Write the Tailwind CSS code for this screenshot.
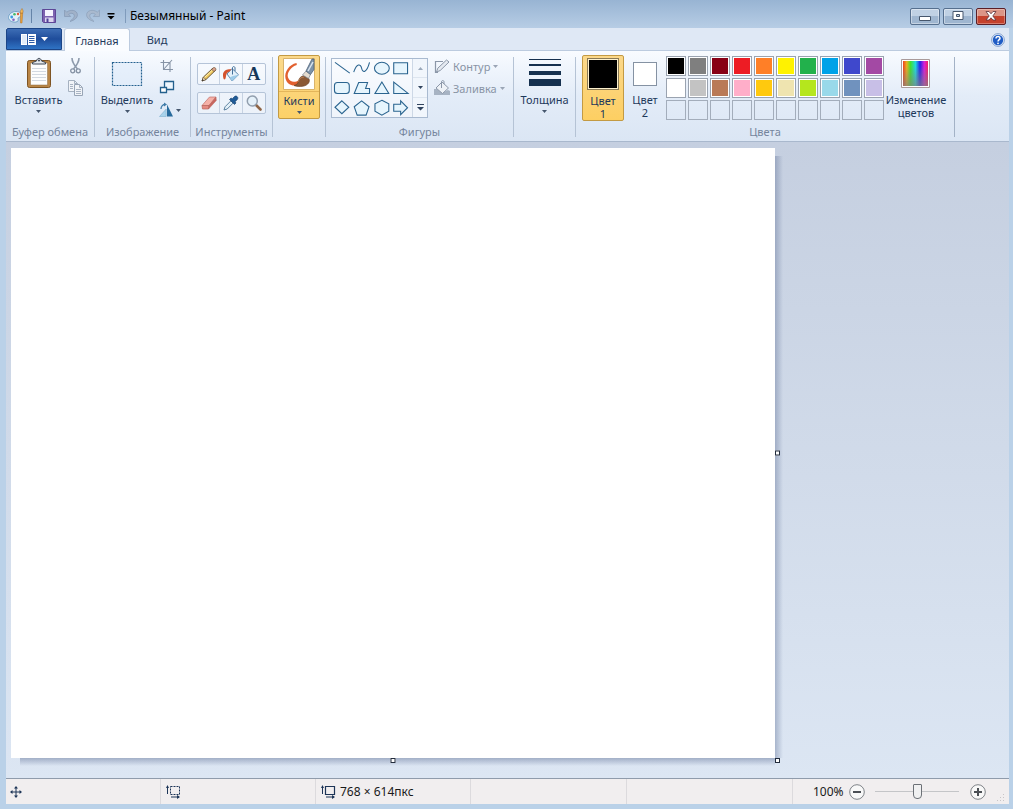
<!DOCTYPE html>
<html lang="ru">
<head>
<meta charset="utf-8">
<meta name="viewport" content="width=device-width, initial-scale=1">
<title>Безымянный - Paint</title>
<script src="https://cdn.jsdelivr.net/npm/@tailwindcss/browser@4"></script>
</head>
<body class="flex min-h-screen flex-col bg-[#bad1e8] font-['Noto_Sans','Open_Sans',sans-serif] text-[11px] leading-[13px] text-[#1e395b]">

<!-- Title bar -->
<header class="flex h-7 items-center bg-linear-to-b from-[#98b4d3] to-[#b7cde5] pr-[7px] pl-2 pt-1">
  <svg class="size-4" viewBox="0 0 16 16"><path d="M.500 9.500C.500 6 4 3.500 8 3.500s5.500 2 5 4-3 1.500-3 3 1 2-1 3.200C5.500 15 .500 13 .500 9.500z" fill="#e3f0f8" stroke="#6a9cc4" stroke-width=".9"/><circle cx="3.700" cy="9" r="1.400" fill="#3b9be0"/><circle cx="6.500" cy="6.300" r="1.300" fill="#46b86a"/><circle cx="5.500" cy="11.700" r="1.300" fill="#8264c0"/><circle cx="10" cy="6" r="1.200" fill="#e05a3b"/><path d="M12.500 5h2.200l-.7 10h-1.500z" fill="#e8a23a" stroke="#b87324" stroke-width=".5"/><path d="M12.500 5c-.7-2 .8-3 1.500-4.500 1 1.500 1.500 3 .7 4.500z" fill="#f0b95a" stroke="#a86a28" stroke-width=".5"/></svg>
  <span class="ml-[7px] h-3.5 w-px bg-[#6584a8]"></span>
  <button class="ml-[9px]" aria-label="Сохранить"><svg class="size-4" viewBox="0 0 16 16"><path d="M1.500 1.500h13v13h-12l-1-1z" fill="#7d62b0" stroke="#5d4696"/><path d="M4 2h8v6H4z" fill="#f6f4ff"/><path d="M4 9.500h8.500V14H4z" fill="#dcd6ee"/><path d="M5.500 10.500h2V14h-2z" fill="#51429a"/></svg></button>
  <button class="ml-1.5" aria-label="Отменить"><svg class="size-4" viewBox="0 0 16 16"><path d="M1.500 2v6.500h6.200L5.600 6.300c2-1.600 5-1.300 5.600.7.600 2.300-1.700 4-4.200 6.500 4.300-1.300 7.500-3.500 7.400-6.800C14.200 2.300 8 .800 3.700 4.200z" fill="#a0b1c8" stroke="#889cb7" stroke-width=".8"/></svg></button>
  <button class="ml-1.5" aria-label="Вернуть"><svg class="size-4" viewBox="0 0 16 16"><path d="M14.500 2v6.500H8.300l2.100-2.200c-2-1.600-5-1.300-5.600.7-.6 2.300 1.700 4 4.200 6.500-4.300-1.300-7.500-3.500-7.400-6.800C1.800 2.300 8 .800 12.300 4.200z" fill="#a9b9ce" stroke="#8fa3bd" stroke-width=".8"/></svg></button>
  <button class="ml-1.5" aria-label="Настройка панели"><svg class="h-4 w-2" viewBox="0 0 8 16"><path d="M.500 5h7v1.500h-7z" fill="#000"/><path d="M.500 8h7L4 11.500z" fill="#000"/></svg></button>
  <span class="ml-2.5 h-3.5 w-px bg-[#7f9bbb]"></span>
  <h1 class="ml-1 text-xs text-black">Безымянный - Paint</h1>
  <div class="ml-auto flex gap-[3px]">
    <button aria-label="Свернуть" class="grid h-[17px] w-[30px] place-items-center rounded-[2px] border border-[#566f8e] bg-linear-to-b from-[#c0d1e4] from-50% to-[#9fb6d0] to-50% ring-1 ring-white/40 ring-inset"><svg width="12" height="12" viewBox="0 0 12 12"><path d="M.500 6.500h11v4H.500z" fill="#fff" stroke="#46566c"/></svg></button>
    <button aria-label="Развернуть" class="grid h-[17px] w-[30px] place-items-center rounded-[2px] border border-[#566f8e] bg-linear-to-b from-[#c0d1e4] from-50% to-[#9fb6d0] to-50% ring-1 ring-white/40 ring-inset"><svg width="12" height="10" viewBox="0 0 12 10"><path d="M1 .500h10v8H1zM4.500 3.500v2h3v-2z" fill="#fff" fill-rule="evenodd" stroke="#46566c"/></svg></button>
    <button aria-label="Закрыть" class="grid h-[17px] w-[30px] place-items-center rounded-[2px] border border-[#5b1f27] bg-linear-to-b from-[#dc9586] from-50% to-[#c4412c] to-50% ring-1 ring-white/30 ring-inset"><svg width="12" height="10" viewBox="0 0 12 10"><path d="M1 .500h3l2 2.300L8 .500h3L7.800 5 11 9H8L6 6.800 4 9H1l3.200-4z" fill="#fff" stroke="#5a3038" stroke-width=".8"/></svg></button>
  </div>
</header>

<div class="mr-1 ml-1.5 flex flex-1 flex-col">
  <!-- Tabs -->
  <nav class="flex h-[23px] bg-[#dfe8f5] shadow-[inset_0_-1px_0_#bccbdf]">
    <button aria-label="Меню Paint" class="flex h-[22px] w-14 items-center justify-center gap-[5px] rounded-t-[2px] border border-[#1c4587] bg-linear-to-b from-[#3d6db5] via-[#1f4d9b] to-[#2f73c4]">
      <svg width="15" height="11" viewBox="0 0 15 11"><path d="M0 0h15v11H0z" fill="#fff"/><path d="M6.500 0v11" stroke="#2d5ba6"/><path d="M8 2.500h5.500M8 4.500h5.500M8 6.500h5.500M8 8.500h5.500" stroke="#2d5ba6"/><path d="M1 1h4.500v9H1z" fill="#e3edf9"/></svg>
      <svg width="7" height="4" viewBox="0 0 7 4"><path d="M0 0h7L3.500 4z" fill="#fff"/></svg>
    </button>
    <button class="ml-0.5 w-[66px] rounded-t-[3px] border border-b-0 border-[#bccbdf] bg-[#fafcff]">Главная</button>
    <button class="w-[54px]">Вид</button>
    <button class="mr-1 ml-auto" aria-label="Справка"><svg class="size-3.5" viewBox="0 0 14 14"><circle cx="7" cy="7" r="6.400" fill="#e6effa" stroke="#6f8fc4" stroke-width=".8"/><circle cx="7" cy="7" r="5.200" fill="#1f5cc5"/><path d="M5 5.400c0-2.600 4.200-2.500 4 0C8.900 6.700 7.100 6.700 7 8.500" fill="none" stroke="#fff" stroke-width="1.500"/><circle cx="7" cy="10.300" r=".9" fill="#fff"/></svg></button>
  </nav>

  <!-- Ribbon -->
  <div class="flex h-[91px] border-b border-[#a9b8cd] bg-linear-to-b from-[#f8fbff] via-[#e3ecf8] to-[#dbe6f4] pt-1 pb-0.5">
    <section class="flex w-[88px] flex-col" aria-label="Буфер обмена">
      <div class="flex h-[70px] gap-1 pl-[7px]">
        <button class="flex w-[51px] flex-col items-center pt-0.5">
          <svg width="26" height="32" viewBox="0 0 26 32"><rect x="1.500" y="3.500" width="23" height="27" rx="2" fill="#b98546" stroke="#7e5423"/><path d="M4.500 6h17v22h-17z" fill="#fdfdfd" stroke="#8b6a42" stroke-width=".5"/><path d="M6 11.500h14M6 14.500h14M6 17.500h14M6 20.500h14M6 23.500h14" stroke="#d3d9e1"/><path d="M6.500 7V5.500L10.500 4c.5-3.500 4.500-3.500 5 0l4 1.500V7z" fill="#e5e9ee" stroke="#3c4654"/><circle cx="13" cy="3.500" r="1" fill="#3c4654"/></svg>
          <span class="mt-1 whitespace-nowrap">Вставить</span>
          <svg class="mt-1" width="5" height="3" viewBox="0 0 5 3"><path d="M0 0h5L2.500 3z" fill="#45566d"/></svg>
        </button>
        <div class="flex flex-col gap-1.5 pt-[3px]">
          <button aria-label="Вырезать"><svg class="size-4" viewBox="0 0 16 16"><path d="M4 0c0 4 1.500 6.500 5.500 11M11 0c0 4-1.500 6.500-5.500 11" fill="none" stroke="#8e9bac" stroke-width="1.600"/><circle cx="4.700" cy="12.800" r="2" fill="none" stroke="#8592a4" stroke-width="1.300"/><circle cx="10.300" cy="12.800" r="2" fill="none" stroke="#8592a4" stroke-width="1.300"/></svg></button>
          <button aria-label="Копировать"><svg class="size-4" viewBox="0 0 16 16"><path d="M.500.500h6l3 3v8h-9zM6.500.500v3h3" fill="#f1f4f8" stroke="#a5b1c0"/><path d="M6.500 4.500h5l3 3v8h-8z" fill="#f1f4f8" stroke="#98a5b6"/><path d="M11.500 4.500v3h3M8 9.500h5M8 11.500h5M8 13.500h5M2 4.500h3M2 6.500h3M2 8.500h3" fill="none" stroke="#a9b4c3"/></svg></button>
        </div>
      </div>
      <h2 class="text-center whitespace-nowrap text-[#75859d]">Буфер обмена</h2>
    </section>
    <span class="my-0.5 w-px bg-[#b5c3d5]"></span>

    <section class="flex w-[95px] flex-col" aria-label="Изображение">
      <div class="flex h-[70px] gap-1.5 pl-1.5">
        <button class="flex w-[52px] flex-col items-center pt-0.5">
          <svg width="32" height="32" viewBox="0 0 32 32"><rect x="1.500" y="5.500" width="29" height="23" fill="#dceafa" fill-opacity=".5" stroke="#24618f" stroke-width="1.200" stroke-dasharray="2 1"/></svg>
          <span class="mt-1 whitespace-nowrap">Выделить</span>
          <svg class="mt-1" width="5" height="3" viewBox="0 0 5 3"><path d="M0 0h5L2.500 3z" fill="#45566d"/></svg>
        </button>
        <div class="flex flex-col items-start gap-1.5 pt-[3px]">
          <button aria-label="Обрезать"><svg class="size-4" viewBox="0 0 16 16"><path d="M4.500 2v9.500H14M1.500 4.500h9.500V14M4.500 11.500l8.500-9.500" fill="none" stroke="#8794a6" stroke-width="1.100"/></svg></button>
          <button aria-label="Изменить размер"><svg class="size-4" viewBox="0 0 16 16"><path d="M5.500 1.500h9v8h-9z" fill="#eef6fd" stroke="#23608d" stroke-width="1.300"/><path d="M1.500 7.500h6v5h-6z" fill="#fff" stroke="#23608d" stroke-width="1.300"/></svg></button>
          <button aria-label="Повернуть" class="flex items-center gap-px"><svg class="size-4" viewBox="0 0 16 16"><path d="M8 2.500L14 14.500H8z" fill="#276a9c"/><path d="M7.200 7v7.500H.500z" fill="#a8d3ec" stroke="#7fb0cf" stroke-width=".6"/><path d="M2 7c0-3 2-4.500 4-4.500" fill="none" stroke="#3f7ba7" stroke-width="1.300"/><path d="M5 .500l3 2-3 2z" fill="#3f7ba7"/></svg><svg width="5" height="3" viewBox="0 0 5 3"><path d="M0 0h5L2.500 3z" fill="#45566d"/></svg></button>
        </div>
      </div>
      <h2 class="text-center whitespace-nowrap text-[#75859d]">Изображение</h2>
    </section>
    <span class="my-0.5 w-px bg-[#b5c3d5]"></span>

    <section class="flex w-[81px] flex-col" aria-label="Инструменты">
      <div class="flex h-[70px] flex-col items-center gap-[7px] pt-2">
        <div class="grid h-[22px] w-[69px] grid-cols-3 divide-x divide-[#c6d2e2] rounded-[2px] border border-[#b5c4d8] bg-white/40">
          <button aria-label="Карандаш" class="grid place-items-center"><svg class="size-4" viewBox="0 0 16 16"><path d="M1 15l1.300-3.800L12 2l2.500 2.300L5 13.500z" fill="#f0c95e" stroke="#5e4a2a" stroke-width=".9"/><path d="M3.500 11.500l8.500-8" stroke="#fff1b4"/><path d="M1 15l1.300-3.800L5 13.500z" fill="#f4e3c4" stroke="#5c4a33" stroke-width=".6"/><path d="M1 15l.6-1.800 1.300 1.100z" fill="#222"/><path d="M12 2c1.500-1.500 4 .8 2.500 2.300L13 5.600 10.600 3.300z" fill="#d9a08c" stroke="#5e4a2a" stroke-width=".6"/></svg></button>
          <button aria-label="Заливка цветом" class="grid place-items-center"><svg class="size-4" viewBox="0 0 16 16"><path d="M9 2.500l6.500 6.200-6.300 6.300L4 8z" fill="#e2f0fa" stroke="#4c7ba5" stroke-width=".9"/><path d="M10 10l5.500-1.300L9.200 15 6.500 11.400z" fill="#9dcbe8"/><path d="M9.500 8.500V2c0-2 2.500-1.800 2.500 0v3" fill="none" stroke="#44709a"/><path d="M8.500 3.200C5 2.800.500 4 0 8c-.2 2 .3 5.500 1.500 5.500S3 10.500 3.200 9C3.500 7.200 5 5.800 6.300 5.800z" fill="#d4532e"/></svg></button>
          <button aria-label="Текст" class="grid place-items-center font-['Liberation_Serif',serif] text-lg leading-4 font-bold text-[#173759]">A</button>
        </div>
        <div class="grid h-[22px] w-[69px] grid-cols-3 divide-x divide-[#c6d2e2] rounded-[2px] border border-[#b5c4d8] bg-white/40">
          <button aria-label="Ластик" class="grid place-items-center"><svg class="size-4" viewBox="0 0 16 16"><path d="M8.500 2h6.500L8 10.500H1z" fill="#f5b1a8" stroke="#c0706a" stroke-width=".7"/><path d="M1 10.500h7l-.5 3.500H1.500z" fill="#e58a82" stroke="#b9655d" stroke-width=".7"/><path d="M8 10.500L15 2l.3 3.500L7.500 14z" fill="#c8665f" stroke="#b9655d" stroke-width=".5"/></svg></button>
          <button aria-label="Палитра" class="grid place-items-center"><svg class="size-4" viewBox="0 0 16 16"><path d="M1 15l1-3.200 6-6 2.200 2.200-6 6z" fill="#e3f0f8" stroke="#4f7797" stroke-width=".9"/><path d="M6.500 4.500L8 3l1.300.7L11.500 1.500c1.800-1.500 4.300.8 3 2.800L12.200 6.700 13 8l-1.500 1.500z" fill="#205b97" stroke="#153f6c" stroke-width=".6"/></svg></button>
          <button aria-label="Масштаб" class="grid place-items-center"><svg class="size-4" viewBox="0 0 16 16"><path d="M10 10l4.500 4.500" stroke="#8f6546" stroke-width="2.600" stroke-linecap="round"/><circle cx="6.300" cy="6" r="5" fill="#e5f1fa" stroke="#929fae" stroke-width="1.500"/></svg></button>
        </div>
      </div>
      <h2 class="text-center whitespace-nowrap text-[#75859d]">Инструменты</h2>
    </section>
    <span class="my-0.5 w-px bg-[#b5c3d5]"></span>

    <section class="flex w-[52px] flex-col items-center">
      <button class="flex h-16 w-[42px] flex-col items-center rounded-[2px] border border-[#c39a43] bg-linear-to-b from-[#fbd98c] to-[#fcd168] pt-0.5">
        <svg width="32" height="32" viewBox="0 0 32 32"><path d="M.500.500h31v31H.500z" fill="#fff" stroke="#d9b36b"/><path d="M13.500 5C6 6.500 1 14 2.500 20.500 4 27 11 29.500 17 26l-1-4c-4 3-9 2.500-11-2.500C3.500 15 8 8.500 13.800 7z" fill="#e2602f"/><path d="M11 27.500c4-1 4-3 5-6s5.500-5.500 9-2 0 8-5 8.700c-3 .5-7 .3-9-.7z" fill="#8b5935" stroke="#643d22" stroke-width=".6"/><path d="M15 24c1-3 3-5 6-5" fill="none" stroke="#b98258"/><path d="M19.500 17l3.500-4 4.500 3.500-2 4z" fill="#e5dccf" stroke="#78838f" stroke-width=".7"/><path d="M23 13l6-12h2v10.500L27.500 16.500z" fill="#7d93aa" stroke="#4f6277" stroke-width=".8"/><path d="M25 13l5-9" stroke="#dbe5ef" stroke-width="1.500"/></svg>
        <span class="mt-px w-full border-t border-[#e4b65a] pt-0.5">Кисти</span>
        <svg class="mt-1" width="5" height="3" viewBox="0 0 5 3"><path d="M0 0h5L2.500 3z" fill="#45566d"/></svg>
      </button>
    </section>
    <span class="my-0.5 w-px bg-[#b5c3d5]"></span>

    <section class="flex w-[187px] flex-col" aria-label="Фигуры">
      <div class="flex h-[70px] items-start gap-1.5 pt-[3px] pl-[5px]">
        <div class="flex h-[60px] w-[97px] border border-[#a9bad0] bg-white/50">
          <svg class="flex-1" width="81" height="58" viewBox="0 0 81 58" fill="#e6f5fd" stroke="#2a648f" stroke-width="1.100" role="img" aria-label="Набор фигур">
            <path d="M3 3l15 11"/><path d="M22 13c3-9 7-9 8-4s5 5 8-6" fill="none"/><ellipse cx="50.500" cy="9" rx="7.500" ry="6"/><path d="M62.500 3.500h14v11h-14z"/>
            <rect x="2.500" y="23.500" width="15" height="11" rx="3"/><path d="M27 23.500h9l-2 6h4v5H22.500z"/><path d="M50.500 23l7 11.500h-14z"/><path d="M62.500 23v11.500H77z"/>
            <path d="M10 42l7 6.500-7 6.500-7-6.500z"/><path d="M30 42l7.500 6-3 8.500h-9l-3-8.500z"/><path d="M50.500 41.500l7 3.500v7.500l-7 4-7-4V45z"/><path d="M62.500 45.500h7V42l7 7-7 7v-3.500h-7z"/>
          </svg>
          <div class="grid w-[15px] grid-rows-3 divide-y divide-[#dde5ef] border-l border-[#cdd8e6] bg-[#f1f6fc]">
            <button aria-label="Вверх" class="grid place-items-center"><svg width="5" height="3" viewBox="0 0 5 3"><path d="M0 3h5L2.500 0z" fill="#9aa8ba"/></svg></button>
            <button aria-label="Вниз" class="grid place-items-center"><svg width="5" height="3" viewBox="0 0 5 3"><path d="M0 0h5L2.500 3z" fill="#31445e"/></svg></button>
            <button aria-label="Ещё" class="grid place-items-center"><svg width="7" height="7" viewBox="0 0 7 7"><path d="M0 0h7v1H0zM0 3h7L3.500 6.500z" fill="#31445e"/></svg></button>
          </div>
        </div>
        <div class="flex flex-col gap-1.5 text-[#8994a5]">
          <button class="flex h-4 items-center gap-[3px]" disabled><svg class="size-4" viewBox="0 0 16 16"><path d="M9 3.500H1.500v11H4" fill="none" stroke="#8b97a8" stroke-width="1.200"/><path d="M2.500 14l1.300-3.800L12.500 2 15 4 6.200 12.500z" fill="#e5eaf1" stroke="#8b97a8"/></svg>Контур<svg width="5" height="3" viewBox="0 0 5 3"><path d="M0 0h5L2.500 3z" fill="#9aa5b5"/></svg></button>
          <button class="flex h-4 items-center gap-[3px]" disabled><svg class="size-4" viewBox="0 0 16 16"><path d="M0 9h3l5 4 6-3 2 1v4H0z" fill="#a7b3c3"/><path d="M8 2l6.500 6L8.500 13.500 2 8z" fill="#eef2f7" stroke="#8b97a8"/><path d="M7.500 8V2c0-2 2.500-2 2.500 0v2" fill="none" stroke="#8b97a8"/></svg>Заливка<svg width="5" height="3" viewBox="0 0 5 3"><path d="M0 0h5L2.500 3z" fill="#9aa5b5"/></svg></button>
        </div>
      </div>
      <h2 class="text-center whitespace-nowrap text-[#75859d]">Фигуры</h2>
    </section>
    <span class="my-0.5 w-px bg-[#b5c3d5]"></span>

    <section class="flex w-[61px] flex-col items-center">
      <button class="flex flex-col items-center pt-0.5">
        <svg width="32" height="32" viewBox="0 0 32 32" fill="#16314f"><path d="M0 2h32v1H0zM0 7h32v2H0zM0 14h32v4H0zM0 22h32v7H0z"/></svg>
        <span class="mt-1 whitespace-nowrap">Толщина</span>
        <svg class="mt-1" width="5" height="3" viewBox="0 0 5 3"><path d="M0 0h5L2.500 3z" fill="#45566d"/></svg>
      </button>
    </section>
    <span class="my-0.5 w-px bg-[#b5c3d5]"></span>

    <section class="flex w-[378px] flex-col" aria-label="Цвета">
      <div class="flex h-[70px] items-start pl-[6px]">
        <button class="flex h-[66px] w-[42px] flex-col items-center rounded-[2px] border border-[#c39a43] bg-linear-to-b from-[#fbd88a] to-[#fdcf62] pt-0.5">
          <span class="size-8 border border-[#8a7a55] bg-black ring-1 ring-[#fdf0cc] ring-inset"></span>
          <span class="mt-1">Цвет<br>1</span>
        </button>
        <button class="flex h-[66px] w-[42px] flex-col items-center pt-[7px]">
          <span class="size-6 border border-[#8592a3] bg-white"></span>
          <span class="mt-[7px]">Цвет<br>2</span>
        </button>
        <div id="palette" class="mt-px grid grid-cols-10 gap-0.5"></div>
        <button class="flex w-[64px] flex-col items-center pt-1">
          <svg width="30" height="30" viewBox="0 0 30 30"><defs><linearGradient id="hue"><stop offset="0" stop-color="#f04020"/><stop offset=".15" stop-color="#e8b020"/><stop offset=".3" stop-color="#40e030"/><stop offset=".5" stop-color="#20d8e0"/><stop offset=".68" stop-color="#2820e8"/><stop offset=".85" stop-color="#d820d8"/><stop offset="1" stop-color="#f02060"/></linearGradient><linearGradient id="fade" x1="0" x2="0" y1="0" y2="1"><stop offset=".2" stop-color="#808080" stop-opacity="0"/><stop offset="1" stop-color="#808080" stop-opacity=".7"/></linearGradient></defs><path d="M.500.500h28v28H.500z" fill="#fff" stroke="#a99a9a"/><path d="M2 2h25v25H2z" fill="url(#hue)"/><path d="M2 2h25v25H2z" fill="url(#fade)"/></svg>
          <span class="mt-1">Изменение<br>цветов</span>
        </button>
      </div>
      <h2 class="text-center whitespace-nowrap text-[#75859d]">Цвета</h2>
    </section>
    <span class="my-0.5 w-px bg-[#a3b2c6]"></span>
  </div>

  <!-- Workspace -->
  <main class="flex flex-1 items-start bg-linear-to-b from-[#c5cfe0] to-[#dce6f3] pt-1.5 pb-5 pl-[5px]">
    <div class="relative">
      <canvas width="764" height="610" class="block bg-white" aria-label="Холст"></canvas>
      <div class="absolute top-2 -right-2 bottom-0 w-2 bg-linear-to-r from-[#5b6c92]/40 to-transparent"></div>
      <div class="absolute right-0 -bottom-2 left-[9px] h-2 bg-linear-to-b from-[#5b6c92]/45 to-transparent"></div>
      <span class="absolute top-1/2 -right-[5px] size-[5px] -translate-y-1/2 border border-[#222c3c] bg-white"></span>
      <span class="absolute -bottom-[5px] left-1/2 size-[5px] -translate-x-1/2 border border-[#222c3c] bg-white"></span>
      <span class="absolute -right-[5px] -bottom-[5px] size-[5px] border border-[#222c3c] bg-white"></span>
    </div>
  </main>

  <!-- Status bar -->
  <footer class="mb-[5px] flex h-[26px] items-center border-t border-[#8f9bab] bg-[#f1eeef] text-xs text-[#1a1a1a]">
    <div class="flex h-full w-[155px] items-center border-r border-[#dcdadd] pl-1"><svg width="12" height="12" viewBox="0 0 12 12"><path d="M6 1v10M1 6h10" stroke="#1d3557"/><path d="M6 0l2 2.500H4zM6 12l2-2.500H4zM0 6l2.500-2v4zM12 6L9.500 4v4z" fill="#1d3557"/></svg></div>
    <div class="flex h-full w-[155px] items-center border-r border-[#dcdadd] pl-[5px]"><svg width="15" height="14" viewBox="0 0 15 14"><path d="M4.500 1.500h9v8h-9z" fill="none" stroke="#1d3557" stroke-dasharray="2 1"/><path d="M1.500 2v7M5 12h8" stroke="#1d3557"/><path d="M1.500 0l1.500 3H0zM14 12l-3 2v-4z" fill="#1d3557"/></svg></div>
    <div class="flex h-full w-[155px] items-center gap-1 border-r border-[#dcdadd] pl-[5px]"><svg width="15" height="14" viewBox="0 0 15 14"><path d="M4.500 1.500h9v8h-9z" fill="none" stroke="#1d3557" stroke-width="1.200"/><path d="M1.500 2v7M5 12h8" stroke="#1d3557"/><path d="M1.500 0l1.500 3H0zM14 12l-3 2v-4z" fill="#1d3557"/></svg><span>768 × 614пкс</span></div>
    <div class="h-full w-[156px] border-r border-[#dcdadd]"></div>
    <div class="h-full flex-1 border-r border-[#dcdadd]"></div>
    <div class="flex w-[216px] items-center pl-5">
      <label for="zoom" class="w-9">100%</label>
      <button aria-label="Уменьшить"><svg class="size-4" viewBox="0 0 16 16"><circle cx="8" cy="8" r="7.300" fill="#f8f8f8" stroke="#7f8388"/><path d="M4 8h8" stroke="#4b4f55" stroke-width="2"/></svg></button>
      <input id="zoom" type="range" min="0" max="100" value="51" class="mx-2.5 h-4 w-[84px] appearance-none bg-linear-to-b from-transparent from-45% via-[#a9acb0] via-45% to-transparent to-50% [&::-webkit-slider-thumb]:h-[15px] [&::-webkit-slider-thumb]:w-[9px] [&::-webkit-slider-thumb]:appearance-none [&::-webkit-slider-thumb]:rounded-t-[1px] [&::-webkit-slider-thumb]:rounded-b-[4px] [&::-webkit-slider-thumb]:border [&::-webkit-slider-thumb]:border-[#6c7076] [&::-webkit-slider-thumb]:bg-[#f0f0f1]">
      <button class="ml-px" aria-label="Увеличить"><svg class="size-4" viewBox="0 0 16 16"><circle cx="8" cy="8" r="7.300" fill="#f8f8f8" stroke="#7f8388"/><path d="M4 8h8M8 4v8" stroke="#4b4f55" stroke-width="2"/></svg></button>
      <svg class="mt-3 mr-1 ml-auto" width="8" height="8" viewBox="0 0 8 8" fill="#c8c5c7"><path d="M6 0h1v1H6zM3 3h1v1H3zM6 3h1v1H6zM0 6h1v1H0zM3 6h1v1H3zM6 6h1v1H6z"/></svg>
    </div>
  </footer>
</div>

<script>
const colors = ['#000000','#7f7f7f','#880015','#ed1c24','#ff7f27','#fff200','#22b14c','#00a2e8','#3f48cc','#a349a4',
  '#ffffff','#c3c3c3','#b97a57','#ffaec9','#ffc90e','#efe4b0','#b5e61d','#99d9ea','#7092be','#c8bfe7'];
const palette = document.getElementById('palette');
for (let i = 0; i < 30; i++) {
  const b = document.createElement('button');
  b.setAttribute('aria-label', i < 20 ? 'Цвет палитры ' + (i + 1) : 'Пустая ячейка ' + (i - 19));
  b.className = i < 20 ? 'size-5 border border-[#9aa3b0] p-px bg-white' : 'size-5 border border-[#a3adbb]';
  if (i < 20) {
    const s = document.createElement('span');
    s.className = 'block size-full';
    s.style.backgroundColor = colors[i];
    b.append(s);
  }
  palette.append(b);
}
</script>
</body>
</html>
